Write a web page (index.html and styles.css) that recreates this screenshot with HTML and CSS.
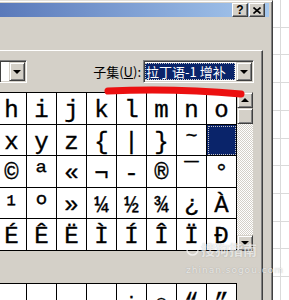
FILE: index.html
```html
<!DOCTYPE html>
<html lang="zh">
<head>
  <meta charset="UTF-8" />
  <title>符号</title>
  <link rel="stylesheet" href="styles.css">
</head>
<body>
  <div class="screen">
    <div class="dialog">
      <div class="titlebar">
        <span class="caption-btn">?</span>
        <span class="caption-btn">
          <svg width="8" height="7" viewBox="0 0 8 7"><path d="M0.5 0.5 L7.5 6.5 M7.5 0.5 L0.5 6.5" stroke="#000" stroke-width="1.6"/></svg>
        </span>
      </div>

      <div class="dialog-body">
        <div class="tab-page">
          <div class="combo-row">
            <div class="combo combo-font">
              <span class="combo-field"></span>
              <span class="drop-btn"><i class="arrow-down"></i></span>
            </div>
            <label class="subset-label">子集(<u>U</u>):</label>
            <div class="combo combo-subset">
              <span class="combo-field"><span class="selection">拉丁语-1 增补</span></span>
              <span class="drop-btn"><i class="arrow-down"></i></span>
            </div>
          </div>

          <div class="grid-frame">
            <div class="char-grid">
              <span class="cell">h</span><span class="cell">i</span><span class="cell">j</span><span class="cell">k</span>
              <span class="cell">l</span><span class="cell">m</span><span class="cell">n</span><span class="cell">o</span>

              <span class="cell">x</span><span class="cell">y</span><span class="cell">z</span><span class="cell">{</span>
              <span class="cell">|</span><span class="cell">}</span><span class="cell top">~</span><span class="cell selected"></span>

              <span class="cell">©</span><span class="cell">ª</span><span class="cell">«</span><span class="cell">¬</span>
              <span class="cell">-</span><span class="cell">®</span><span class="cell">¯</span><span class="cell">°</span>

              <span class="cell">¹</span><span class="cell">º</span><span class="cell">»</span><span class="cell">¼</span>
              <span class="cell">½</span><span class="cell">¾</span><span class="cell">¿</span><span class="cell">À</span>

              <span class="cell">É</span><span class="cell">Ê</span><span class="cell">Ë</span><span class="cell">Ì</span>
              <span class="cell">Í</span><span class="cell">Î</span><span class="cell">Ï</span><span class="cell">Ð</span>
            </div>
            <div class="scrollbar">
              <span class="scroll-btn"><i class="arrow-up"></i></span>
              <span class="scroll-thumb"></span>
              <span class="scroll-track"></span>
              <span class="scroll-btn"><i class="arrow-down"></i></span>
            </div>
          </div>

          <div class="recent-grid">
            <span class="cell"></span><span class="cell"></span><span class="cell"></span><span class="cell"></span>
            <span class="cell">÷</span><span class="cell">∩</span><span class="cell">“</span><span class="cell">”</span>
          </div>
        </div>
      </div>

      <!-- red marker stroke drawn over the screenshot -->
      <svg class="marker" width="145" height="14" viewBox="0 0 145 14">
        <path d="M4 5 Q70 2 137 8" fill="none" stroke="#ec1010" stroke-width="7" stroke-linecap="round"/>
      </svg>

      <div class="watermark">
        <div class="wm-logo">
          <svg width="13" height="13" viewBox="0 0 13 13"><circle cx="6.5" cy="6.5" r="5.5" fill="none" stroke="currentColor" stroke-width="1.6"/></svg>
          <span>搜狗指南</span>
        </div>
        <div class="wm-url">zhinan.sogou.com</div>
      </div>
    </div>

    <div class="sheet"></div>
  </div>
</body>
</html>
```

FILE: styles.css
```css
* {
  box-sizing: border-box;
}

body {
  margin: 0;
  width: 289px;
  height: 300px;
  overflow: hidden;
  background: #fff;
  font-family: "Noto Sans CJK SC", sans-serif;
}

.screen {
  display: flex;
  height: 300px;
}

/* window */
.dialog {
  position: relative;
  flex: none;
  width: 273px;
  background: #d4d0c8;
  border-top: 1px solid #e4e1db;
  border-right: 1px solid #404040;
  box-shadow: inset 0 1px #fff, inset -1px 0 #808080;
  padding: 2px 3px 0 0;
  display: flex;
  flex-direction: column;
}

.titlebar {
  height: 19px;
  background: linear-gradient(90deg, #5a79ba, #a6c8ee);
  display: flex;
  align-items: center;
  justify-content: flex-end;
  gap: 1px;
  padding-right: 4px;
}

.caption-btn {
  width: 16px;
  height: 14px;
  display: flex;
  align-items: center;
  justify-content: center;
  background: #d4d0c8;
  border: 1px solid;
  border-color: #fff #404040 #404040 #fff;
  box-shadow: inset -1px -1px #808080;
  font: bold 12px "Liberation Sans", sans-serif;
  color: #000;
}

.dialog-body {
  flex: 1;
  display: flex;
  flex-direction: column;
  padding-top: 33px;
}

.tab-page {
  flex: 1;
  margin-right: 6px;
  border-top: 1px solid #fff;
  border-right: 1px solid #404040;
  box-shadow: inset -1px 0 #808080;
  padding: 9px 8px 0 0;
}

/* combo boxes */
.combo-row {
  display: flex;
  align-items: center;
  height: 23px;
}

.combo {
  display: flex;
  height: 23px;
  background: #fff;
  border: 1px solid;
  border-color: #808080 #fff #fff #808080;
  box-shadow: inset 1px 1px #404040, inset -1px -1px #d4d0c8;
  padding: 1px;
}

.combo-font {
  width: 27px;
  border-left: none;
  padding-left: 0;
}

.combo-subset {
  width: 111px;
}

.combo-field {
  flex: 1;
  display: flex;
  padding: 1px 1px 1px 0;
}

.selection {
  flex: 1;
  background: #0a246a;
  color: #fff;
  outline: 1px dotted #c8c8c8;
  outline-offset: -1px;
  font-size: 13px;
  line-height: 17px;
  padding-left: 1px;
  white-space: nowrap;
}

.subset-label {
  margin-left: auto;
  margin-right: 2px;
  font-size: 13px;
  color: #000;
}

.drop-btn,
.scroll-btn,
.scroll-thumb {
  display: flex;
  align-items: center;
  justify-content: center;
  background: #d4d0c8;
  border: 1px solid;
  border-color: #d4d0c8 #404040 #404040 #d4d0c8;
  box-shadow: inset 1px 1px #fff, inset -1px -1px #808080;
}

.drop-btn {
  width: 16px;
}

.arrow-down,
.arrow-up {
  width: 0;
  height: 0;
  border-left: 4px solid transparent;
  border-right: 4px solid transparent;
}

.arrow-down {
  border-top: 4px solid #000;
}

.arrow-up {
  border-bottom: 4px solid #000;
}

/* symbol grid */
.grid-frame {
  display: flex;
  margin: 9px 0 0 -3px;
}

.char-grid,
.recent-grid {
  display: grid;
  grid-template-columns: repeat(8, 30px);
  background: #fff;
  border-top: 1px solid #000;
}

.char-grid {
  grid-auto-rows: 31.6px;
}

.recent-grid {
  width: 240px;
  grid-auto-rows: 32px;
  margin: 32px 0 0 -3px;
}

.cell {
  display: flex;
  justify-content: center;
  align-items: flex-start;
  padding-top: 6px;
  border-right: 1px solid #000;
  border-bottom: 1px solid #000;
  font: 24px/24px "Liberation Mono", "DejaVu Sans Mono", monospace;
  -webkit-text-stroke: 0.35px #000;
  color: #000;
}

.cell.top {
  padding-top: 0;
  font-size: 20px;
}

.recent-grid .cell {
  padding-top: 8px;
}

.cell.selected {
  background: #0a246a;
  outline: 1px dotted #c8c8c8;
  outline-offset: -2px;
}

.scrollbar {
  width: 16px;
  display: flex;
  flex-direction: column;
}

.scroll-btn,
.scroll-thumb {
  height: 16px;
  flex: none;
}

.scroll-track {
  flex: 1;
  background: repeating-conic-gradient(#d4d0c8 0 25%, #fff 0 50%) 0 0 / 2px 2px;
}

/* overlays */
.marker {
  position: absolute;
  left: 104px;
  top: 85px;
}

.watermark {
  position: absolute;
  left: 186px;
  top: 240px;
  color: rgba(255, 255, 255, 0.8);
  text-shadow: 0 0 1px rgba(90, 90, 90, 0.5);
  opacity: 0.85;
}

.wm-logo {
  display: flex;
  align-items: center;
  gap: 2px;
  font-size: 14px;
  font-weight: bold;
  line-height: 16px;
}

.wm-url {
  margin-top: 8px;
  font: 9px "DejaVu Sans", sans-serif;
  letter-spacing: 1px;
}

/* spreadsheet behind the dialog */
.sheet {
  flex: 1;
  background:
    linear-gradient(90deg, transparent 7px, #dadada 7px 8px, transparent 8px),
    repeating-linear-gradient(180deg, transparent 0 26.7px, #dadada 26.7px 27.7px);
}
```
